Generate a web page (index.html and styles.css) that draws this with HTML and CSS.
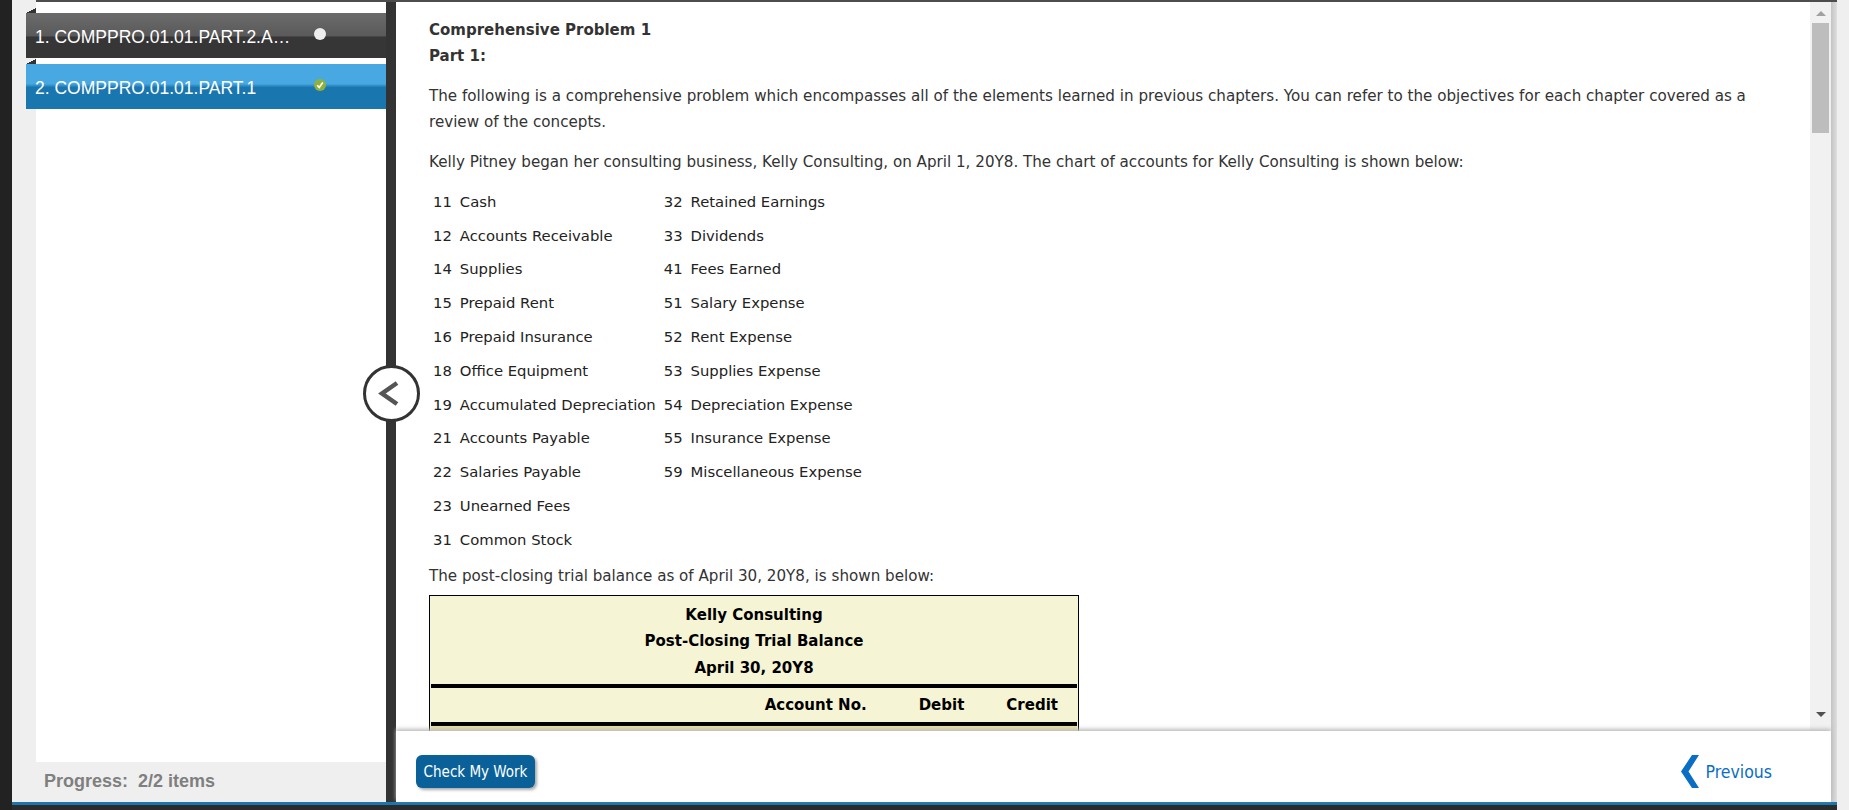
FILE: index.html
```html
<!DOCTYPE html>
<html>
<head>
    <meta charset="UTF-8">
    <title>Comprehensive Problem 1</title>
    <link rel="stylesheet" href="styles.css">
</head>
<body>
    <div class="edge-left"></div>
    <div class="shell">
        <div class="top-line"></div>
        <div class="work-area">
            <div class="sidebar">
                <div class="item-list">
                    <div class="fold"></div>
                    <div class="item item-dark">
                        <span class="item-title">1. COMPPRO.01.01.PART.2.A…</span>
                        <span class="dot"></span>
                    </div>
                    <div class="fold"></div>
                    <div class="item item-blue">
                        <span class="item-title">2. COMPPRO.01.01.PART.1</span>
                        <span class="dot dot-done">
                            <svg viewBox="0 0 12 12" width="12" height="12"><path d="M3.2 6.2 L5.2 8.4 L8.8 3.6" fill="none" stroke="#fff" stroke-width="1.7"/></svg>
                        </span>
                    </div>
                </div>
                <div class="progress">Progress:&nbsp; 2/2 items</div>
            </div>

            <div class="splitter">
                <div class="toggle">
                    <svg viewBox="0 0 57 57" width="57" height="57"><path d="M34 18 L19 28.5 L34 39" fill="none" stroke="#555" stroke-width="4.5"/></svg>
                </div>
            </div>

            <div class="main">
                <div class="reader">
                    <div class="content">
                        <p class="heading">Comprehensive Problem 1<br>Part 1:</p>
                        <p>The following is a comprehensive problem which encompasses all of the elements learned in previous chapters. You can refer to the objectives for each chapter covered as a review of the concepts.</p>
                        <p class="before-list">Kelly Pitney began her consulting business, Kelly Consulting, on April 1, 20Y8. The chart of accounts for Kelly Consulting is shown below:</p>
                        <table class="accounts">
                            <tr><td>11</td><td>Cash</td><td>32</td><td>Retained Earnings</td></tr>
                            <tr><td>12</td><td>Accounts Receivable</td><td>33</td><td>Dividends</td></tr>
                            <tr><td>14</td><td>Supplies</td><td>41</td><td>Fees Earned</td></tr>
                            <tr><td>15</td><td>Prepaid Rent</td><td>51</td><td>Salary Expense</td></tr>
                            <tr><td>16</td><td>Prepaid Insurance</td><td>52</td><td>Rent Expense</td></tr>
                            <tr><td>18</td><td>Office Equipment</td><td>53</td><td>Supplies Expense</td></tr>
                            <tr><td>19</td><td>Accumulated Depreciation</td><td>54</td><td>Depreciation Expense</td></tr>
                            <tr><td>21</td><td>Accounts Payable</td><td>55</td><td>Insurance Expense</td></tr>
                            <tr><td>22</td><td>Salaries Payable</td><td>59</td><td>Miscellaneous Expense</td></tr>
                            <tr><td>23</td><td>Unearned Fees</td><td></td><td></td></tr>
                            <tr><td>31</td><td>Common Stock</td><td></td><td></td></tr>
                        </table>
                        <p class="after-list">The post-closing trial balance as of April 30, 20Y8, is shown below:</p>
                        <div class="balance">
                            <div class="balance-title">Kelly Consulting<br>Post-Closing Trial Balance<br>April 30, 20Y8</div>
                            <div class="balance-head">
                                <span class="col-no">Account No.</span>
                                <span class="col-debit">Debit</span>
                                <span class="col-credit">Credit</span>
                            </div>
                            <div class="balance-row"></div>
                        </div>
                    </div>
                    <div class="scrollbar">
                        <div class="arrow arrow-up"></div>
                        <div class="thumb"></div>
                        <div class="arrow arrow-down"></div>
                    </div>
                </div>
                <div class="footer">
                    <button class="check-btn">Check My Work</button>
                    <a class="prev-link">
                        <svg viewBox="0 0 18 33" width="18" height="33"><path d="M18 0 L11 0 L0 16.5 L11 33 L18 33 L7.5 16.5 Z" fill="#0a6ec4"/></svg>
                        Previous
                    </a>
                </div>
            </div>
            <div class="main-shadow"></div>
        </div>
        <div class="blue-line"></div>
        <div class="bottom-bar"></div>
    </div>
    <div class="edge-right"></div>
</body>
</html>
```

FILE: styles.css
```css
* {
    box-sizing: border-box;
}
html, body {
    height: 100%;
}
body {
    margin: 0;
    display: flex;
    height: 810px;
    overflow: hidden;
    background-color: #efefef;
    font-family: "DejaVu Sans", Verdana, sans-serif;
    font-size: 15.15px;
    color: #333;
}
.edge-left {
    width: 12px;
    background-color: #222;
}
.edge-right {
    width: 12px;
    background-color: #efefef;
}
.shell {
    flex: 1;
    display: flex;
    flex-direction: column;
    min-width: 0;
}
.top-line {
    height: 2px;
    margin-left: 24px;
    background-color: #4d4d4d;
}
.work-area {
    flex: 1;
    display: flex;
    min-height: 0;
}
.blue-line {
    height: 3px;
    background-color: #1b76ad;
}
.bottom-bar {
    height: 5px;
    background-color: #2b2b2b;
}

/* left column */
.sidebar {
    width: 374px;
    display: flex;
    flex-direction: column;
    background-color: #efefef;
}
.item-list {
    flex: 1;
    margin-left: 24px;
    padding-top: 6px;
    background-color: #fff;
}
.fold {
    width: 10px;
    height: 5px;
    margin-left: -10px;
    background: linear-gradient(to bottom right, transparent 50%, #333 50%);
}
.item {
    display: flex;
    align-items: center;
    height: 45px;
    margin-left: -10px;
    margin-bottom: 1px;
    padding: 4px 0 0 9px;
    color: #fff;
    font-family: "Liberation Sans", Arial, sans-serif;
    font-size: 17.5px;
}
.item-dark {
    background: linear-gradient(#6b6b6b, #5a5a5a 50%, #363636 54%, #363636);
}
.item-blue {
    background: linear-gradient(#48a8e2, #48a8e2 44%, #1a76ae 52%, #1a76ae);
}
.item-title {
    width: 279px;
    white-space: nowrap;
}
.dot {
    display: flex;
    width: 12px;
    height: 12px;
    margin-top: -7px;
    border-radius: 50%;
    background-color: #eee;
    align-items: center;
    justify-content: center;
}
.dot-done {
    background-color: #8fb13c;
}
.progress {
    height: 40px;
    padding: 9px 0 0 32px;
    color: #7f7f7f;
    font-family: "Liberation Sans", Arial, sans-serif;
    font-size: 18px;
    font-weight: bold;
}

/* splitter between the columns */
.splitter {
    width: 10px;
    background-color: #333;
    position: relative;
}
.toggle {
    position: absolute;
    left: -23px;
    top: 363px;
    width: 57px;
    height: 57px;
    border: 3px solid #333;
    border-radius: 50%;
    background-color: #fff;
}
.toggle svg {
    margin: -3px;
    display: block;
}

/* reading pane */
.main {
    flex: 1;
    display: flex;
    flex-direction: column;
    min-width: 0;
    background-color: #fff;
}
.reader {
    flex: 1;
    display: flex;
    min-height: 0;
}
.content {
    flex: 1;
    overflow: hidden;
    padding: 15px 16px 0 33px;
    line-height: 26px;
}
.content p {
    margin: 0 0 14px 0;
}
.heading {
    font-size: 15px;
    font-weight: bold;
}
.content .before-list {
    margin-bottom: 10px;
}
.accounts {
    border-collapse: collapse;
    color: #222;
    font-size: 14.8px;
}
.accounts td {
    height: 33.8px;
    padding: 0 4px;
    white-space: nowrap;
}
.content .after-list {
    margin: 6px 0 6px 0;
}
.balance {
    width: 650px;
    border: 1px solid #000;
    background-color: #f5f4d4;
    color: #000;
    font-size: 15px;
    font-weight: bold;
}
.balance-title {
    height: 92px;
    padding-top: 6px;
    text-align: center;
    border-bottom: 4px solid #000;
    margin: 0 1px;
    line-height: 26.5px;
}
.balance-head {
    display: flex;
    justify-content: flex-end;
    height: 38px;
    padding-top: 4px;
    border-bottom: 4px solid #000;
    margin: 0 1px;
}
.col-debit {
    margin-left: 52px;
}
.col-credit {
    margin: 0 19px 0 42px;
}
.balance-row {
    height: 40px;
    margin: 0 1px;
    background-color: #e8dfa0;
}
.scrollbar {
    width: 21px;
    display: flex;
    flex-direction: column;
    align-items: center;
    background-color: #f1f1f1;
}
.thumb {
    width: 17px;
    height: 110px;
    background-color: #bdbdbd;
}
.arrow {
    width: 0;
    border-left: 5px solid transparent;
    border-right: 5px solid transparent;
}
.arrow-up {
    margin: 9px 0 7px;
    border-bottom: 5px solid #a0a0a0;
}
.arrow-down {
    margin-top: auto;
    margin-bottom: 14px;
    border-top: 5px solid #505050;
}
.main-shadow {
    width: 6px;
    background: linear-gradient(to right, #c4c4c4, #dedede);
}
.footer {
    height: 71px;
    display: flex;
    align-items: center;
    justify-content: space-between;
    padding: 10px 59px 0 20px;
    box-shadow: 0 -2px 4px #bbb;
    position: relative;
    background-color: #fff;
}
.check-btn {
    width: 119px;
    height: 33px;
    border: none;
    border-radius: 6px;
    background-color: #0a6199;
    box-shadow: 2px 2px 3px #aaa;
    color: #fff;
    font-family: "DejaVu Sans Condensed", "DejaVu Sans", sans-serif;
    font-size: 15px;
    padding: 0;
}
.prev-link {
    display: flex;
    align-items: center;
    gap: 7px;
    color: #0a6ec4;
    font-family: "DejaVu Sans Condensed", "DejaVu Sans", sans-serif;
    font-size: 17.5px;
}
```
